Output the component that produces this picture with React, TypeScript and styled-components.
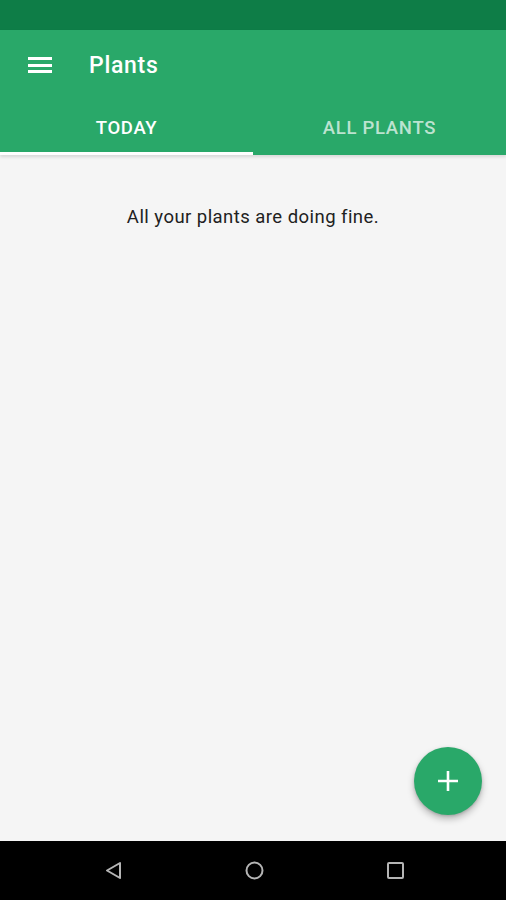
import * as React from 'react';
import styled, { createGlobalStyle } from 'styled-components';

const color = {
  statusGreen: '#0e7d47',
  primary: '#29a869',
  page: '#f5f5f5',
  text: '#212121'
};

const GlobalStyle = createGlobalStyle`
  html, body {
    margin: 0;
    padding: 0;
    background: ${color.page};
  }
  * { box-sizing: border-box; }
`;

const Screen = styled.div`
  width: 506px;
  height: 900px;
  display: flex;
  flex-direction: column;
  font-family: Roboto, "Noto Sans", sans-serif;
  overflow: hidden;
`;

const StatusBar = styled.div`
  height: 30px;
  flex: none;
  background: ${color.statusGreen};
`;

const AppBar = styled.header`
  flex: none;
  background: ${color.primary};
  color: #fff;
  box-shadow: 0 2px 3px rgba(0, 0, 0, 0.12);
  position: relative;
  z-index: 1;
`;

const Toolbar = styled.div`
  height: 70px;
  display: flex;
  align-items: center;
  padding: 0 0 0 28px;
  gap: 37px;
`;

const MenuButton = styled.div`
  width: 24px;
  height: 16px;
  display: flex;
  flex-direction: column;
  justify-content: space-between;
  span {
    display: block;
    height: 3px;
    background: #fff;
  }
`;

const Title = styled.h1`
  margin: 0;
  font-size: 23px;
  font-weight: 500;
  letter-spacing: 0.7px;
`;

const Tabs = styled.nav`
  height: 55px;
  display: grid;
  grid-template-columns: 1fr 1fr;
`;

const Tab = styled.div<{ $active?: boolean }>`
  display: flex;
  align-items: center;
  justify-content: center;
  font-size: 18.5px;
  font-weight: 500;
  letter-spacing: 0.7px;
  text-transform: uppercase;
  padding-top: 3px;
  color: ${p => (p.$active ? '#fff' : 'rgba(255, 255, 255, 0.7)')};
  border-bottom: 3px solid ${p => (p.$active ? '#fff' : 'transparent')};
`;

const Content = styled.main`
  flex: 1;
  position: relative;
  background: ${color.page};
  padding-top: 50px;
  text-align: center;
`;

const Empty = styled.p`
  margin: 0;
  font-size: 18.5px;
  letter-spacing: 0.45px;
  line-height: 24px;
  color: ${color.text};
`;

const Fab = styled.button`
  position: absolute;
  right: 24px;
  bottom: 26px;
  width: 68px;
  height: 68px;
  border-radius: 50%;
  border: none;
  padding: 0;
  background: ${color.primary};
  box-shadow: 0 4px 7px rgba(0, 0, 0, 0.25), 0 1px 3px rgba(0, 0, 0, 0.15);
  display: flex;
  align-items: center;
  justify-content: center;
`;

const NavBar = styled.div`
  height: 59px;
  flex: none;
  background: #000;
  display: flex;
  align-items: center;
  justify-content: center;
  gap: 122px;
  padding-left: 2px;
`;

const NavIcon = styled.svg`
  width: 19px;
  height: 19px;
  display: block;
`;

const navStroke = '#b5b5b5';

export default function App() {
  return (
    <Screen>
      <GlobalStyle />
      <StatusBar />
      <AppBar>
        <Toolbar>
          <MenuButton>
            <span />
            <span />
            <span />
          </MenuButton>
          <Title>Plants</Title>
        </Toolbar>
        <Tabs>
          <Tab $active>Today</Tab>
          <Tab>All plants</Tab>
        </Tabs>
      </AppBar>
      <Content>
        <Empty>All your plants are doing fine.</Empty>
        <Fab aria-label="Add plant">
          <svg width="22" height="22" viewBox="0 0 22 22">
            <path d="M11 1v20M1 11h20" stroke="#fff" strokeWidth="2.6" />
          </svg>
        </Fab>
      </Content>
      <NavBar>
        <NavIcon viewBox="0 0 19 19">
          <path d="M16 2 L3 9.5 L16 17 Z" fill="none" stroke={navStroke} strokeWidth="2" strokeLinejoin="round" />
        </NavIcon>
        <NavIcon viewBox="0 0 19 19">
          <circle cx="9.5" cy="9.5" r="8" fill="none" stroke={navStroke} strokeWidth="2" />
        </NavIcon>
        <NavIcon viewBox="0 0 19 19">
          <rect x="2" y="2" width="15" height="15" rx="1" fill="none" stroke={navStroke} strokeWidth="2" />
        </NavIcon>
      </NavBar>
    </Screen>
  );
}
